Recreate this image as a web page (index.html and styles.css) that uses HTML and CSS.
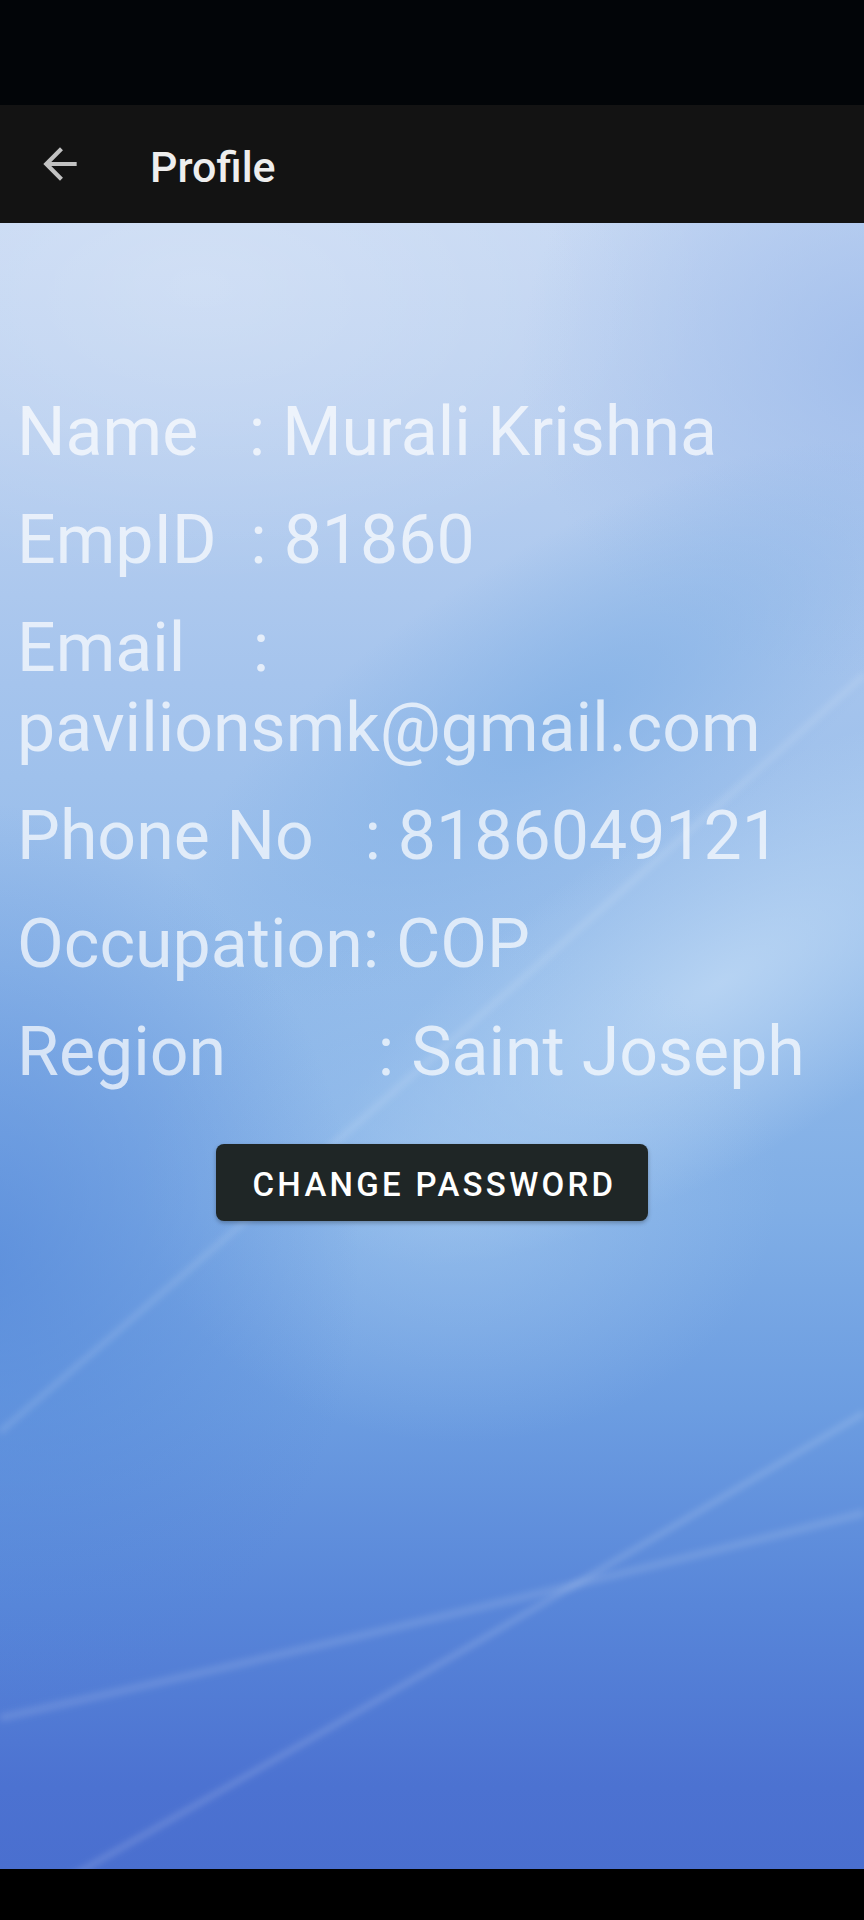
FILE: index.html
```html
<!DOCTYPE html>
<html lang="en">
<head>
<meta charset="utf-8">
<title>Profile</title>
<link rel="stylesheet" href="styles.css">
</head>
<body>
<div class="screen">
  <div class="statusbar"></div>
  <header class="toolbar">
    <svg class="back" viewBox="0 0 24 24" aria-hidden="true"><path d="M20 11H7.83l5.59-5.59L12 4l-8 8 8 8 1.41-1.41L7.83 13H20v-2z"/></svg>
    <h1 class="title">Profile</h1>
  </header>
  <main class="content">
    <svg class="bg" viewBox="0 0 864 1646" preserveAspectRatio="none" aria-hidden="true">
      <defs>
        <linearGradient id="base" x1="0" y1="0" x2="0" y2="1">
          <stop offset="0" stop-color="#c6d8f3"/>
          <stop offset="0.12" stop-color="#bad0f0"/>
          <stop offset="0.28" stop-color="#a5c4ed"/>
          <stop offset="0.45" stop-color="#93bbea"/>
          <stop offset="0.60" stop-color="#80aee6"/>
          <stop offset="0.72" stop-color="#6c9de1"/>
          <stop offset="0.84" stop-color="#5886d9"/>
          <stop offset="0.95" stop-color="#4c72d1"/>
          <stop offset="1" stop-color="#4a6fcf"/>
        </linearGradient>
        <radialGradient id="pale"><stop offset="0" stop-color="#fff" stop-opacity=".22"/><stop offset="1" stop-color="#fff" stop-opacity="0"/></radialGradient>
        <radialGradient id="blueTR"><stop offset="0" stop-color="#9dbbeb" stop-opacity=".8"/><stop offset="1" stop-color="#9dbbeb" stop-opacity="0"/></radialGradient>
        <radialGradient id="pocket"><stop offset="0" stop-color="#83b1e6" stop-opacity=".85"/><stop offset="1" stop-color="#83b1e6" stop-opacity="0"/></radialGradient>
        <radialGradient id="lightR"><stop offset="0" stop-color="#bfd9f5" stop-opacity=".8"/><stop offset="1" stop-color="#bfd9f5" stop-opacity="0"/></radialGradient>
        <radialGradient id="lightC"><stop offset="0" stop-color="#a2c7ef" stop-opacity=".6"/><stop offset="1" stop-color="#a2c7ef" stop-opacity="0"/></radialGradient>
        <radialGradient id="darkL"><stop offset="0" stop-color="#5286d9" stop-opacity=".7"/><stop offset="1" stop-color="#5286d9" stop-opacity="0"/></radialGradient>
        <filter id="soft" x="-10%" y="-10%" width="120%" height="120%"><feGaussianBlur stdDeviation="3"/></filter>
      </defs>
      <rect width="864" height="1646" fill="url(#base)"/>
      <ellipse cx="200" cy="60" rx="520" ry="300" fill="url(#pale)"/>
      <ellipse cx="880" cy="140" rx="360" ry="320" fill="url(#blueTR)"/>
      <ellipse cx="560" cy="500" rx="460" ry="170" transform="rotate(-32 560 500)" fill="url(#pocket)"/>
      <ellipse cx="720" cy="760" rx="460" ry="170" transform="rotate(-32 720 760)" fill="url(#lightR)"/>
      <ellipse cx="460" cy="960" rx="320" ry="260" fill="url(#lightC)"/>
      <ellipse cx="-20" cy="1040" rx="380" ry="460" fill="url(#darkL)"/>
      <path d="M0 1209 Q 420 850 864 452" stroke="#fff" stroke-opacity=".13" stroke-width="6" filter="url(#soft)" fill="none"/>
      <path d="M60 1660 Q 480 1420 864 1190" stroke="#fff" stroke-opacity=".15" stroke-width="6" filter="url(#soft)" fill="none"/>
      <path d="M0 1495 Q 430 1400 864 1290" stroke="#fff" stroke-opacity=".12" stroke-width="8" filter="url(#soft)" fill="none"/>
    </svg>
    <div class="info">
      <p class="row">Name   : Murali Krishna</p>
      <p class="row">EmpID  : 81860</p>
      <p class="row">Email    : pavilionsmk@gmail.com</p>
      <p class="row">Phone No   : 8186049121</p>
      <p class="row">Occupation: COP</p>
      <p class="row">Region         : Saint Joseph</p>
    </div>
    <button class="btn" type="button">CHANGE PASSWORD</button>
  </main>
  <div class="navbar"></div>
</div>
</body>
</html>
```

FILE: styles.css
```css
html, body {
  margin: 0;
  padding: 0;
  background: #000;
}

.screen {
  width: 864px;
  height: 1920px;
  display: flex;
  flex-direction: column;
  font-family: Roboto, "Noto Sans", "Liberation Sans", sans-serif;
  overflow: hidden;
}

.statusbar {
  height: 105px;
  flex: none;
  background: #020508;
}

.toolbar {
  height: 118px;
  flex: none;
  background: #131313;
  display: flex;
  align-items: center;
}

.back {
  width: 50px;
  height: 50px;
  margin-left: 35px;
  fill: #c2c2c2;
  flex: none;
}

.title {
  margin: 5px 0 0 65px;
  font-size: 43px;
  font-weight: 500;
  color: #eeeeee;
  line-height: normal;
}

.content {
  flex: 1;
  position: relative;
  z-index: 0;
  display: flex;
  flex-direction: column;
  align-items: center;
  padding-top: 169px;
}

.bg {
  position: absolute;
  top: 0;
  left: 0;
  width: 100%;
  height: 100%;
  z-index: -1;
}

.info {
  align-self: stretch;
  padding: 0 14px 0 17px;
}

.row {
  margin: 0 0 28px;
  font-size: 68px;
  line-height: 80px;
  font-weight: 400;
  color: rgba(255, 255, 255, 0.7);
  white-space: pre-wrap;
}

.btn {
  margin-top: 24px;
  width: 432px;
  height: 77px;
  padding: 3px 0 0 5px;
  border: none;
  border-radius: 8px;
  background: #1f2626;
  box-shadow: 0 2px 4px rgba(0, 0, 0, 0.28);
  color: #ffffff;
  font-family: Roboto, "Noto Sans", "Liberation Sans", sans-serif;
  font-size: 33px;
  font-weight: 500;
  letter-spacing: 3.3px;
}

.navbar {
  height: 51px;
  flex: none;
  background: #000;
}
```
